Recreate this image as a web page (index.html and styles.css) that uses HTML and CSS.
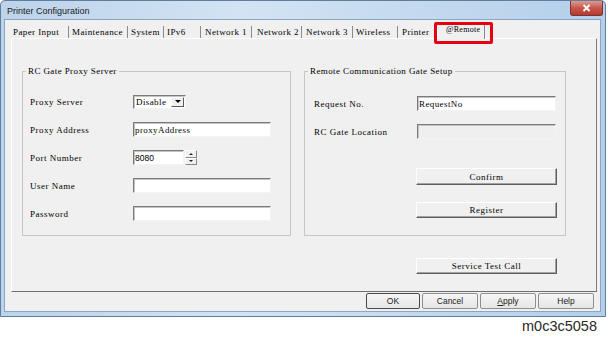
FILE: index.html
```html
<!DOCTYPE html>
<html lang="en">
<head>
  <meta charset="UTF-8">
  <title>Printer Configuration</title>
  <link rel="stylesheet" href="styles.css">
</head>
<body>

  <div class="window">
    <div class="titlebar">
      <span class="title">Printer Configuration</span>
      <div class="close">
        <svg width="9" height="8" viewBox="0 0 9 8"><path d="M1.5 1 L7.5 7 M7.5 1 L1.5 7" stroke="#fff" stroke-width="1.8"/></svg>
      </div>
    </div>

    <div class="client">
      <div class="tabs">
        <span class="tab w-paper">Paper Input</span>
        <span class="tab w-maint">Maintenance</span>
        <span class="tab w-system">System</span>
        <span class="tab w-ipv6">IPv6</span>
        <span class="tab w-net1">Network 1</span>
        <span class="tab w-net2">Network 2</span>
        <span class="tab w-net3">Network 3</span>
        <span class="tab w-wireless">Wireless</span>
        <span class="tab w-printer">Printer</span>
        <span class="tab active">@Remote</span>
      </div>

      <div class="page">
        <div class="columns">
          <fieldset class="group proxy">
            <legend>RC Gate Proxy Server</legend>
            <div class="row">
              <label>Proxy Server</label>
              <div class="select">
                <span>Disable</span>
                <span class="drop"></span>
              </div>
            </div>
            <div class="row">
              <label>Proxy Address</label>
              <input class="field" type="text" value="proxyAddress">
            </div>
            <div class="row">
              <label>Port Number</label>
              <input class="field port" type="text" value="8080">
              <div class="spin">
                <span class="up"></span>
                <span class="down"></span>
              </div>
            </div>
            <div class="row">
              <label>User Name</label>
              <input class="field" type="text" value="">
            </div>
            <div class="row">
              <label>Password</label>
              <input class="field" type="text" value="">
            </div>
          </fieldset>

          <div class="side">
            <fieldset class="group gate">
              <legend>Remote Communication Gate Setup</legend>
              <div class="row">
                <label>Request No.</label>
                <input class="field" type="text" value="RequestNo">
              </div>
              <div class="row">
                <label>RC Gate Location</label>
                <input class="field" type="text" value="" disabled>
              </div>
              <button class="btn confirm">Confirm</button>
              <button class="btn register">Register</button>
            </fieldset>
            <button class="btn test">Service Test Call</button>
          </div>
        </div>
      </div>

      <div class="footer">
        <button class="dlg default">OK</button>
        <button class="dlg">Cancel</button>
        <button class="dlg"><u>A</u>pply</button>
        <button class="dlg">Help</button>
      </div>
    </div>
  </div>

  <div class="caption">m0c3c5058</div>

</body>
</html>
```

FILE: styles.css
```css
body {
  margin: 0;
  background-color: #fff;
  font-family: "Liberation Serif", serif;
}

.window {
  width: 606px;
  height: 317px;
  box-sizing: border-box;
  border: 1px solid #5f7d9c;
  border-radius: 5px 5px 0 0;
  background: linear-gradient(90deg, #bcd3eb, #d3e3f3 40%, #b4cfea);
  padding: 0 4px 4px 3px;
}

.titlebar {
  height: 18px;
  display: flex;
  align-items: center;
  justify-content: space-between;
}

.title {
  font-family: "Liberation Sans", sans-serif;
  font-size: 9px;
  color: #1b1b1b;
  margin-left: 3px;
  margin-top: 1px;
}

.close {
  width: 31px;
  height: 14px;
  margin-top: -3px;
  margin-right: -2px;
  display: flex;
  align-items: center;
  justify-content: center;
  border: 1px solid #7a3430;
  border-top: none;
  border-radius: 0 0 3px 3px;
  background: linear-gradient(#e09a8f, #c7574b 50%, #b8382c);
}

.client {
  height: 293px;
  box-sizing: border-box;
  background-color: #f0f0f0;
  border: 1px solid #8aa6c3;
  padding: 0 0 0 6px;
}

/* tab strip */
.tabs {
  height: 18px;
  display: flex;
  align-items: flex-end;
}

.tab {
  height: 12px;
  box-sizing: border-box;
  border-right: 1px solid #8a8a8a;
  font-size: 9px;
  letter-spacing: 0.4px;
  line-height: 12px;
  padding-left: 3px;
  color: #000;
  white-space: nowrap;
}

.w-paper { width: 58px; padding-left: 2px; }
.w-maint { width: 59px; }
.w-system { width: 36px; }
.w-ipv6 { width: 37px; }
.w-net1 { width: 51px; padding-left: 4px; }
.w-net2 { width: 50px; padding-left: 5px; }
.w-net3 { width: 51px; padding-left: 4px; }
.w-wireless { width: 45px; }
.w-printer { width: 39px; padding-left: 4px; border-right: none; overflow: hidden; }

.tab.active {
  position: relative;
  width: 48px;
  height: 16px;
  margin-bottom: -1px;
  padding-left: 8px;
  font-size: 8px;
  letter-spacing: 0.3px;
  line-height: 12px;
  background-color: #f0f0f0;
  border-top: 1px solid #fff;
  border-left: 1px solid #fff;
}

.tab.active::after {
  content: "";
  position: absolute;
  left: -4px;
  right: -9px;
  top: -2px;
  bottom: -5px;
  border: 3px solid #e50012;
  border-radius: 2px;
}

/* tab page */
.page {
  width: 586px;
  height: 254px;
  box-sizing: border-box;
  border-top: 1px solid #fff;
  border-left: 1px solid #fff;
  border-right: 1px solid #7c7c7c;
  border-bottom: 1px solid #6f6f6f;
  padding: 27px 0 0 10px;
}

.columns {
  display: flex;
  gap: 13px;
}

.group {
  margin: 0;
  padding: 0;
  height: 170px;
  box-sizing: border-box;
  border: 1px solid #c6c6c6;
}

.group legend {
  margin-left: 3px;
  padding: 0 2px;
  font-size: 9px;
  letter-spacing: 0.4px;
  line-height: 10px;
  color: #000;
}

.proxy { width: 269px; }
.gate { width: 262px; padding-top: 2px; }

.row {
  display: flex;
  align-items: center;
  height: 15px;
  margin-top: 13px;
  margin-left: 7px;
}

.row:first-of-type { margin-top: 18px; }
.gate .row { margin-left: 9px; }

.row label {
  width: 103px;
  font-size: 9px;
  letter-spacing: 0.5px;
  color: #000;
}

.field {
  width: 138px;
  height: 15px;
  box-sizing: border-box;
  margin: 0;
  padding: 0 1px;
  border: 1px solid;
  border-color: #7a7a7a #f4f4f4 #f4f4f4 #7a7a7a;
  box-shadow: inset 1px 1px 0 #c4c4c4;
  background-color: #fff;
  font-family: "Liberation Serif", serif;
  font-size: 9px;
  letter-spacing: 0.4px;
  color: #000;
}

.gate .field { width: 139px; }

.field:disabled {
  background-color: #efefef;
}

.field.port {
  width: 51px;
  font-family: "Liberation Sans", sans-serif;
  font-size: 8.5px;
  letter-spacing: 0;
}

.select {
  width: 53px;
  height: 14px;
  box-sizing: border-box;
  display: flex;
  align-items: center;
  justify-content: space-between;
  padding: 0 1px 0 2px;
  border: 1px solid;
  border-color: #7a7a7a #f4f4f4 #f4f4f4 #7a7a7a;
  box-shadow: inset 1px 1px 0 #c4c4c4;
  background-color: #fff;
  font-size: 9px;
  letter-spacing: 0.4px;
}

.drop {
  width: 13px;
  height: 10px;
  box-sizing: border-box;
  border: 1px solid;
  border-color: #fff #5a5a5a #5a5a5a #fff;
  background-color: #f0f0f0;
  display: flex;
  align-items: center;
  justify-content: center;
}

.drop::before {
  content: "";
  border-left: 3px solid transparent;
  border-right: 3px solid transparent;
  border-top: 3px solid #000;
}

.spin {
  width: 12px;
  height: 15px;
  margin-left: 1px;
  display: flex;
  flex-direction: column;
}

.spin span {
  flex: 1;
  display: flex;
  align-items: center;
  justify-content: center;
  border: 1px solid;
  border-color: #fff #8a8a8a #8a8a8a #fff;
  background-color: #f0f0f0;
}

.spin .up::before {
  content: "";
  border-left: 2px solid transparent;
  border-right: 2px solid transparent;
  border-bottom: 2px solid #222;
}

.spin .down::before {
  content: "";
  border-left: 2px solid transparent;
  border-right: 2px solid transparent;
  border-top: 2px solid #222;
}

.btn {
  display: block;
  width: 141px;
  height: 17px;
  box-sizing: border-box;
  margin: 0 0 0 111px;
  padding: 0;
  border: 1px solid;
  border-color: #fff #5e5e5e #5e5e5e #fff;
  box-shadow: inset -1px -1px 0 #a3a3a3;
  background-color: #f0f0f0;
  font-family: "Liberation Serif", serif;
  font-size: 9px;
  letter-spacing: 0.5px;
  color: #000;
}

.confirm { margin-top: 29px; }
.register { margin-top: 17px; height: 16px; }
.test { margin-top: 22px; margin-left: 112px; height: 16px; }

/* dialog buttons */
.footer {
  display: flex;
  justify-content: flex-end;
  gap: 2px;
  padding: 1px 6px 0 0;
}

.dlg {
  width: 56px;
  height: 16px;
  padding: 0;
  border: 1px solid #8e8e8e;
  border-radius: 2px;
  background: linear-gradient(#f6f6f6, #e6e6e6);
  font-family: "Liberation Sans", sans-serif;
  font-size: 8.5px;
  color: #222;
}

.dlg.default {
  width: 54px;
  border-color: #4a4a4a;
}

.caption {
  width: 597px;
  text-align: right;
  margin-top: 1px;
  font-family: "Liberation Sans", sans-serif;
  font-size: 14.5px;
  color: #2a2a2a;
}
```
